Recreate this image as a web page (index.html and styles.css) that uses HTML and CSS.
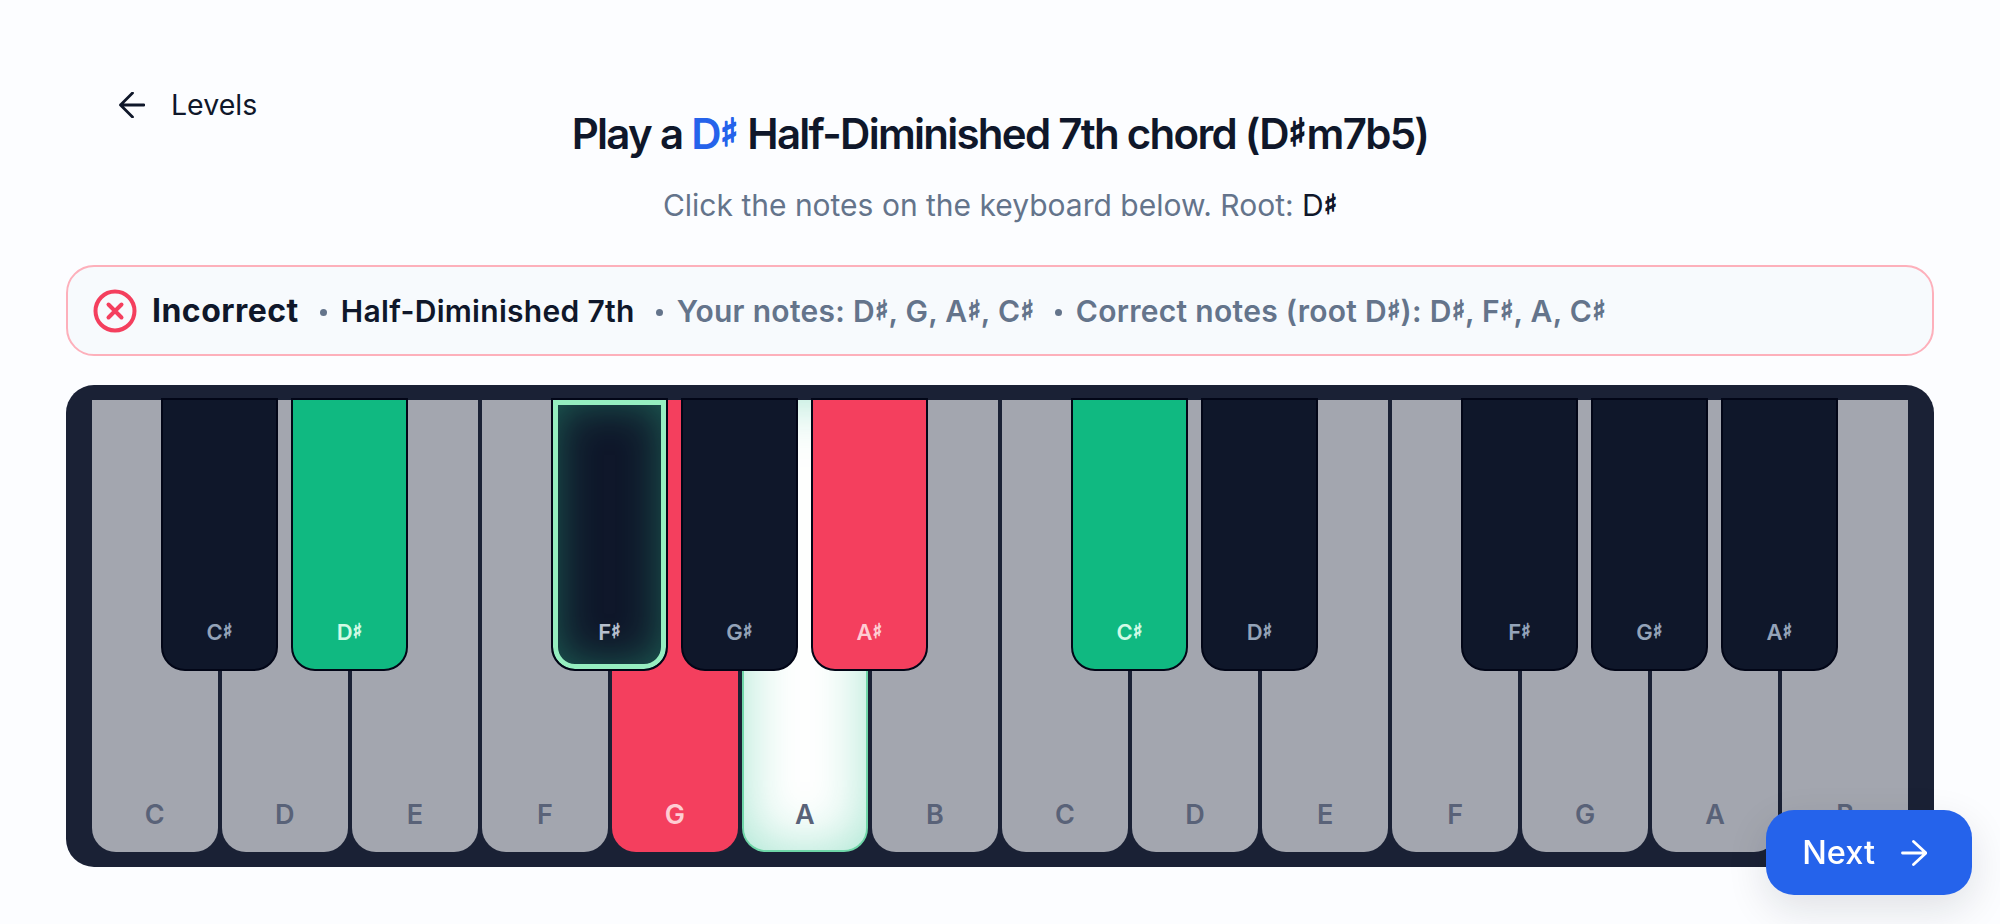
FILE: index.html
```html
<!DOCTYPE html>
<html lang="en">
<head>
	<meta charset="utf-8">
	<title>Chord practice</title>
	<link rel="stylesheet" href="styles.css">
</head>
<body>
	<main class="page">
		<header class="top">
			<a class="back" href="#">
				<svg class="back-icon" viewBox="0 0 26 26" fill="none" stroke="currentColor" stroke-width="2.800" stroke-linecap="round" stroke-linejoin="round">
					<path d="M25 13H1.500M13.500 1 1.500 13l12 12"></path>
				</svg>
				Levels
			</a>
			<h1 class="title">Play a <span class="root">D<i class="sharp">♯</i></span> Half-Diminished 7th chord (D<i class="sharp">♯</i>m7b5)</h1>
		</header>
		<p class="hint">Click the notes on the keyboard below. Root: <span class="hint-root">D<i class="sharp">♯</i></span></p>

		<section class="result">
			<svg class="result-icon" viewBox="0 0 44 44" fill="none" stroke="#f43f5e" stroke-width="4" stroke-linecap="round">
				<circle cx="22" cy="22" r="19.500"></circle>
				<path d="M15.500 15.500l13 13M28.500 15.500l-13 13"></path>
			</svg>
			<strong class="result-title">Incorrect</strong>
			<span class="dot"></span>
			<span class="result-chord">Half-Diminished 7th</span>
			<span class="dot"></span>
			<span class="result-notes">Your notes: D<i class="sharp">♯</i>, G, A<i class="sharp">♯</i>, C<i class="sharp">♯</i></span>
			<span class="dot"></span>
			<span class="result-notes">Correct notes (root D<i class="sharp">♯</i>): D<i class="sharp">♯</i>, F<i class="sharp">♯</i>, A, C<i class="sharp">♯</i></span>
		</section>

		<section class="keyboard">
			<div class="white-keys">
				<button class="key" type="button">C</button>
				<button class="key" type="button">D</button>
				<button class="key" type="button">E</button>
				<button class="key" type="button">F</button>
				<button class="key key-wrong" type="button">G</button>
				<button class="key key-missed" type="button">A</button>
				<button class="key" type="button">B</button>
				<button class="key" type="button">C</button>
				<button class="key" type="button">D</button>
				<button class="key" type="button">E</button>
				<button class="key" type="button">F</button>
				<button class="key" type="button">G</button>
				<button class="key" type="button">A</button>
				<button class="key" type="button">B</button>
			</div>
			<button class="black" style="--n: 1" type="button"><span>C<i class="sharp">♯</i></span></button>
			<button class="black black-right" style="--n: 2" type="button"><span>D<i class="sharp">♯</i></span></button>
			<button class="black black-missed" style="--n: 4" type="button"><span>F<i class="sharp">♯</i></span></button>
			<button class="black" style="--n: 5" type="button"><span>G<i class="sharp">♯</i></span></button>
			<button class="black black-wrong" style="--n: 6" type="button"><span>A<i class="sharp">♯</i></span></button>
			<button class="black black-right" style="--n: 8" type="button"><span>C<i class="sharp">♯</i></span></button>
			<button class="black" style="--n: 9" type="button"><span>D<i class="sharp">♯</i></span></button>
			<button class="black" style="--n: 11" type="button"><span>F<i class="sharp">♯</i></span></button>
			<button class="black" style="--n: 12" type="button"><span>G<i class="sharp">♯</i></span></button>
			<button class="black" style="--n: 13" type="button"><span>A<i class="sharp">♯</i></span></button>
		</section>
	</main>

	<button class="next" type="button">
		Next
		<svg class="next-icon" viewBox="0 0 26 26" fill="none" stroke="currentColor" stroke-width="2.800" stroke-linecap="round" stroke-linejoin="round">
			<path d="M1.500 13H25M12.500 1.500 25 13 12.500 24.500"></path>
		</svg>
	</button>
</body>
</html>
```

FILE: styles.css
```css
* {
	box-sizing: border-box;
}
body {
	margin: 0;
	background: #fcfdff;
	color: #0f172a;
	font-family: Inter, "Noto Sans", sans-serif;
	-webkit-font-smoothing: antialiased;
}
button {
	font-family: inherit;
	cursor: pointer;
}
.sharp {
	font-family: "DejaVu Sans", sans-serif;
	font-size: 0.92em;
	font-style: normal;
	font-weight: 700;
	letter-spacing: 0;
	line-height: 0;
	vertical-align: 0.08em;
	-webkit-text-stroke: 0.045em currentColor;
}
.page {
	padding: 0 66px;
}
.top {
	display: grid;
	grid-template-columns: 1fr auto 1fr;
	padding-top: 88px;
}
.back {
	display: flex;
	align-items: center;
	align-self: start;
	gap: 26px;
	padding-left: 53px;
	color: #0f172a;
	font-size: 28.500px;
	line-height: 33px;
	text-decoration: none;
}
.back-icon {
	width: 26px;
	height: 26px;
}
.title {
	grid-column: 2;
	margin: 22px 0 0;
	font-size: 42px;
	line-height: 48px;
	font-weight: 600;
	letter-spacing: -0.041em;
	white-space: nowrap;
}
.root {
	color: #2563eb;
}
.hint {
	margin: 29px 0 0;
	color: #64748b;
	font-size: 30px;
	line-height: 36px;
	text-align: center;
}
.hint-root {
	color: #0f172a;
}
.result {
	display: flex;
	align-items: center;
	height: 91px;
	margin-top: 42px;
	padding: 0 25px;
	background: #f7fafd;
	border: 2px solid #fdb0bb;
	border-radius: 28px;
	font-size: 30px;
	font-weight: 600;
	letter-spacing: 0.01em;
	white-space: nowrap;
}
.result-icon {
	width: 44px;
	height: 44px;
	flex: none;
	margin-right: 15px;
}
.result-title {
	font-size: 32px;
	font-weight: 700;
	letter-spacing: 0.015em;
}
.result-notes {
	color: #64748b;
}
.dot {
	width: 7px;
	height: 7px;
	margin: 4px 14px 0 21px;
	border-radius: 50%;
	background: #64748b;
}
.keyboard {
	position: relative;
	height: 482px;
	margin-top: 29px;
	padding: 15px 26px;
	background: #1a2135;
	border-radius: 28px;
}
.white-keys {
	display: grid;
	grid-template-columns: repeat(14, 1fr);
	gap: 4.500px;
	height: 100%;
}
.key {
	display: flex;
	align-items: flex-end;
	justify-content: center;
	padding: 0 0 21px;
	background: #a3a6af;
	border: 0;
	border-radius: 0 0 24px 24px;
	color: #596278;
	font-size: 27px;
	font-weight: 600;
	line-height: 32px;
}
.key-wrong {
	background: #f43f5e;
	color: #fecdd3;
}
.key-missed {
	background: #fff;
	border: 2px solid #6fd6a8;
	border-top: 0;
	padding-bottom: 19px;
	box-shadow: inset 0 0 56px rgba(16, 185, 129, 0.38);
}
.black {
	position: absolute;
	top: 13px;
	left: calc(26px + var(--n) * 130px - 61px);
	display: flex;
	align-items: flex-end;
	justify-content: center;
	width: 117px;
	height: 273px;
	padding: 0 0 23px;
	background: #0f172a;
	border: 2px solid #020617;
	border-radius: 0 0 24px 24px;
	color: #94a3b8;
	font-size: 22px;
	font-weight: 600;
	line-height: 28px;
}
.black-right {
	background: #10b981;
	color: #d1fae5;
}
.black-wrong {
	background: #f43f5e;
	color: #fecdd3;
}
.black-missed {
	background: #0f172a;
	color: #b6bfcc;
	box-shadow: inset 0 0 0 5px #96eec0, inset 0 0 44px 3px rgba(52, 211, 153, 0.4);
}
.next {
	position: fixed;
	right: 28px;
	bottom: 29px;
	display: flex;
	align-items: center;
	gap: 26px;
	height: 85px;
	padding: 0 45px 0 36px;
	background: #2563eb;
	border: 0;
	border-radius: 28px;
	box-shadow: 0 14px 40px rgba(15, 23, 42, 0.12);
	color: #fff;
	font-size: 32.500px;
	font-weight: 500;
}
.next-icon {
	width: 26px;
	height: 26px;
}
```
